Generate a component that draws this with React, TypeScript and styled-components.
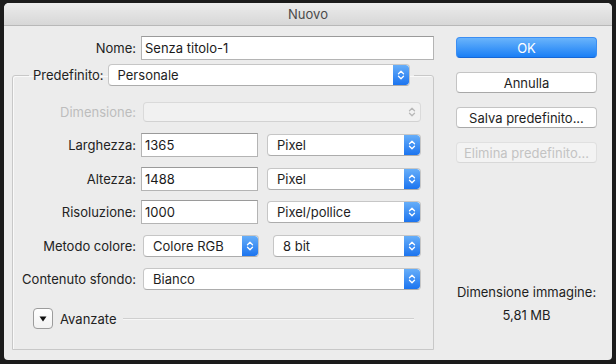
import React from 'react'
import styled, { createGlobalStyle } from 'styled-components'

const GlobalStyle = createGlobalStyle`
  html, body {
    margin: 0;
    padding: 0;
    background: #1b1b1b;
  }
  body {
    width: 616px;
    height: 364px;
    overflow: hidden;
    font-family: Inter, 'Noto Sans', 'Liberation Sans', sans-serif;
    font-size: 13px;
    color: #222222;
  }
`

const Window = styled.div`
  margin: 3px 4px 0 4px;
  width: 608px;
  height: 357px;
  background: #ececec;
  border-radius: 5px 5px 4px 4px;
  overflow: hidden;
  display: flex;
  flex-direction: column;
`

const TitleBar = styled.div`
  height: 22px;
  flex: none;
  display: flex;
  align-items: center;
  justify-content: center;
  background: linear-gradient(#ececec, #d7d7d7);
  border-bottom: 1px solid #b8b8b8;
  color: #4a4a4a;
`

const Body = styled.div`
  flex: 1;
  display: flex;
  gap: 22px;
  padding: 10px 15px 0 8px;
`

const LeftColumn = styled.div`
  width: 422px;
  display: flex;
  flex-direction: column;
`

const NameRow = styled.div`
  display: grid;
  grid-template-columns: 124px 1fr;
  column-gap: 5px;
  align-items: center;
`

const Label = styled.label<{ $disabled?: boolean }>`
  text-align: right;
  white-space: nowrap;
  color: ${p => (p.$disabled ? '#bdbdbd' : '#222222')};
`

const TextInput = styled.div<{ $width?: number }>`
  box-sizing: border-box;
  height: 24px;
  width: ${p => (p.$width ? `${p.$width}px` : 'auto')};
  flex: ${p => (p.$width ? 'none' : '1')};
  background: #ffffff;
  border: 1px solid #b4b4b4;
  border-top-color: #9a9a9a;
  padding: 0 3px;
  display: flex;
  align-items: center;
  color: #1a1a1a;
`

const Group = styled.fieldset`
  margin: 4px 0 0 0;
  padding: 14px 12px 19px 0;
  border: 1px solid #c8c8c8;
  border-radius: 3px 3px 0 0;
  box-shadow: inset 1px 1px 0 #f9f9f9;
  min-width: 0;
`

const Legend = styled.legend`
  margin-left: 16px;
  padding: 0 4px;
  display: flex;
  align-items: center;
  gap: 2px;
  height: 22px;
`

const Rows = styled.div`
  display: grid;
  grid-template-columns: 123px 280px;
  column-gap: 5px;
  row-gap: 9.4px;
  grid-auto-rows: 24px;
  align-items: center;
`

const Fields = styled.div<{ $gap?: number }>`
  display: flex;
  align-items: center;
  gap: ${p => p.$gap ?? 7}px;
`

const SelectBox = styled.div<{ $width?: number; $disabled?: boolean; $height?: number }>`
  box-sizing: border-box;
  margin-left: 2px;
  height: ${p => p.$height ?? 22}px;
  width: ${p => (p.$width ? `${p.$width}px` : 'auto')};
  flex: ${p => (p.$width ? 'none' : '1')};
  display: flex;
  align-items: stretch;
  background: ${p => (p.$disabled ? '#f1f1f1' : '#ffffff')};
  border: 1px solid ${p => (p.$disabled ? '#dadada' : '#c6c6c6')};
  border-bottom-color: ${p => (p.$disabled ? '#d2d2d2' : '#acacac')};
  border-radius: 4px;
  overflow: hidden;
`

const SelectText = styled.span`
  flex: 1;
  display: flex;
  align-items: center;
  padding-left: 9px;
  color: #1e1e1e;
  white-space: nowrap;
`

const Stepper = styled.span<{ $disabled?: boolean }>`
  width: 16px;
  flex: none;
  display: flex;
  align-items: center;
  justify-content: center;
  background: ${p => (p.$disabled ? 'transparent' : 'linear-gradient(#66aef9, #1c74ef)')};
  border-radius: 0 3px 3px 0;
`

const AdvancedRow = styled.div`
  margin-top: 17px;
  margin-left: 20px;
  display: flex;
  align-items: center;
  height: 22px;
`

const Disclosure = styled.span`
  box-sizing: border-box;
  width: 20px;
  height: 21px;
  border: 1px solid #9c9c9c;
  border-radius: 4px;
  background: linear-gradient(#ffffff, #f2f2f2);
  display: flex;
  align-items: center;
  justify-content: center;
`

const AdvancedLabel = styled.span`
  margin-left: 7px;
  margin-right: 6px;
`

const Rule = styled.span`
  flex: 1;
  height: 0;
  margin-right: 7px;
  border-top: 1px solid #cfcfcf;
  border-bottom: 1px solid #f7f7f7;
`

const RightColumn = styled.div`
  width: 141px;
  padding-top: 1px;
  display: flex;
  flex-direction: column;
  gap: 14px;
`

const Button = styled.div<{ $variant?: 'primary' | 'disabled' }>`
  box-sizing: border-box;
  height: 21px;
  border-radius: 4px;
  display: flex;
  align-items: center;
  justify-content: center;
  white-space: nowrap;
  background: ${p =>
    p.$variant === 'primary'
      ? 'linear-gradient(#6ab4fb, #1a7ff6)'
      : p.$variant === 'disabled'
        ? '#f3f3f3'
        : '#ffffff'};
  color: ${p =>
    p.$variant === 'primary' ? '#ffffff' : p.$variant === 'disabled' ? '#c3c3c3' : '#1e1e1e'};
  border: 1px solid
    ${p => (p.$variant === 'primary' ? '#3b8ef3' : p.$variant === 'disabled' ? '#e0e0e0' : '#c4c4c4')};
  border-bottom-color: ${p =>
    p.$variant === 'primary' ? '#1667d6' : p.$variant === 'disabled' ? '#d8d8d8' : '#a8a8a8'};
`

const ImageInfo = styled.div`
  margin-top: 104px;
  text-align: center;
  line-height: 23px;
  color: #1e1e1e;
`

const Chevrons = ({ color }: { color: string }) => (
  <svg width="8" height="12" viewBox="0 0 8 12">
    <path
      d="M1.5 4.8 L4 2.3 L6.5 4.8 M1.5 7.2 L4 9.7 L6.5 7.2"
      fill="none"
      stroke={color}
      strokeWidth="1.3"
      strokeLinecap="round"
      strokeLinejoin="round"
    />
  </svg>
)

type SelectProps = {
  value?: string
  width?: number
  height?: number
  disabled?: boolean
}

const Select = ({ value, width, height, disabled }: SelectProps) => (
  <SelectBox $width={width} $height={height} $disabled={disabled}>
    <SelectText>{value}</SelectText>
    <Stepper $disabled={disabled}>
      <Chevrons color={disabled ? '#b8b8b8' : '#ffffff'} />
    </Stepper>
  </SelectBox>
)

const App = () => (
  <>
    <GlobalStyle />
    <Window>
      <TitleBar>Nuovo</TitleBar>
      <Body>
        <LeftColumn>
          <NameRow>
            <Label>Nome:</Label>
            <TextInput>Senza titolo-1</TextInput>
          </NameRow>
          <Group>
            <Legend>
              <Label>Predefinito:</Label>
              <Select value="Personale" width={302} />
            </Legend>
            <Rows>
              <Label $disabled>Dimensione:</Label>
              <Select disabled height={20} />

              <Label>Larghezza:</Label>
              <Fields>
                <TextInput $width={117}>1365</TextInput>
                <Select value="Pixel" />
              </Fields>

              <Label>Altezza:</Label>
              <Fields>
                <TextInput $width={117}>1488</TextInput>
                <Select value="Pixel" />
              </Fields>

              <Label>Risoluzione:</Label>
              <Fields>
                <TextInput $width={117}>1000</TextInput>
                <Select value="Pixel/pollice" />
              </Fields>

              <Label>Metodo colore:</Label>
              <Fields $gap={12}>
                <Select value="Colore RGB" width={116} />
                <Select value="8 bit" />
              </Fields>

              <Label>Contenuto sfondo:</Label>
              <Select value="Bianco" />
            </Rows>
            <AdvancedRow>
              <Disclosure>
                <svg width="8" height="6" viewBox="0 0 8 6">
                  <path d="M0.5 0.5 H7.5 L4 5.5 Z" fill="#111111" />
                </svg>
              </Disclosure>
              <AdvancedLabel>Avanzate</AdvancedLabel>
              <Rule />
            </AdvancedRow>
          </Group>
        </LeftColumn>
        <RightColumn>
          <Button $variant="primary">OK</Button>
          <Button>Annulla</Button>
          <Button>Salva predefinito...</Button>
          <Button $variant="disabled">Elimina predefinito...</Button>
          <ImageInfo>
            Dimensione immagine:
            <br />
            5,81 MB
          </ImageInfo>
        </RightColumn>
      </Body>
    </Window>
  </>
)

export default App
